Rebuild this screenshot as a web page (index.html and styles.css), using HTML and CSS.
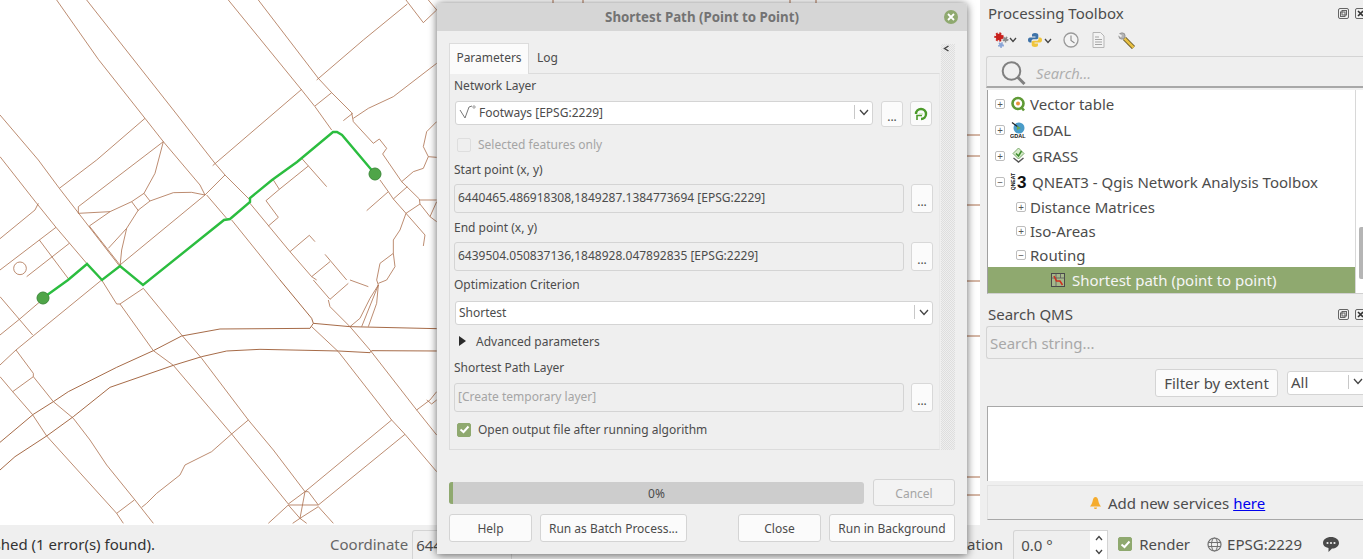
FILE: index.html
```html
<!DOCTYPE html>
<html>
<head>
    <title>QGIS - Shortest Path</title>
    <meta name="viewport" content="width=device-width, initial-scale=1.0">
    <link rel="stylesheet" href="styles.css">
</head>
<body>
    <div class="main">
        <div class="map">
            <svg class="map-svg" width="980" height="525" viewBox="0 0 980 525">
                <g class="roads" transform="scale(0.33333)">
                    <path d="M170 0L295 178L435 355L490 425L600 555L615 585M260 0L520 330L645 490L675 525L750 600L750 610L870 755L935 830L950 840M685 0L905 270L945 320L995 390M775 0L955 235L995 278L1055 338L1060 365L1120 430L1138 417L1160 445L1148 462L1205 545L1258 597L1260 612L1218 640L1275 705L1270 738"/>
                    <path d="M950 240L1090 120L1222 12M1218 0L1270 68L1310 30M1285 0L1310 30M1060 355L1105 325L1180 290L1310 190M1030 362L1058 340M945 318L995 278M638 497L905 268"/>
                    <path d="M0 345L115 480L178 565L360 800M0 470L110 610L168 682L260 790M178 565L290 480L435 355M235 640L235 620L490 425L465 520L432 580L395 605L330 635L235 640M432 580L450 603L520 578L575 577L615 585M450 603L415 630L380 685L365 750L360 800M395 605L415 632M330 635L268 678M380 685L325 745M268 678L360 795M360 795L615 585L675 525M620 585L680 655M695 660L840 840"/>
                    <path d="M115 610L105 630L0 716M168 682L0 810M208 730L80 830M118 720L208 840"/>
                    <circle cx="60" cy="805" r="19"/>
                    <path d="M820 540L838 568L925 498M905 475L980 560M838 568L798 602L835 652L805 678M870 755L928 706L945 725M975 763L1040 840M990 785L935 830"/>
                    <path d="M1140 540L1165 575L1100 632M1165 575L1180 597L1222 560M1180 597L1218 640M1260 600L1310 600M1260 612L1290 650L1310 665M1310 605L1290 650M1218 640L1200 690L1180 720L1180 760L1140 790L1130 840M1180 760L1185 800L1160 840M1205 545L1240 515L1270 505L1285 470L1270 440L1280 395L1310 365M1285 470L1310 472"/>
                    <g transform="translate(0 840)">
                        <path class="wide" d="M840 0L935 115L940 130L930 145L660 147L545 168L460 212L350 262L205 335L160 365L100 403L0 487M940 130L1050 140L1310 146M1015 213L1110 218L1115 212L1310 213M1015 213L780 208L680 213L605 230L520 256L330 322L220 410L140 468L45 530L0 570"/>
                        <path d="M940 0L990 58L1045 10M985 60L990 80L1050 140L1110 210L1250 390L1310 465M935 140L1015 215L1175 420L1215 463L1310 575M430 25L545 165L605 235L745 420L820 510L915 635M360 72L460 212L520 256L695 462L865 672M305 0L350 72L360 72L430 25"/>
                        <path d="M0 50L58 118L98 165M0 165L58 118L120 65M305 0L48 210L0 255M48 210L100 280L100 290L160 365L220 415L270 480L320 555L405 660L460 730M100 290L38 335L97 403L140 468L350 700L370 730M350 700L403 660M38 335L0 290"/>
                        <path d="M745 420L695 462L635 515L555 555L540 585L470 640L440 670L425 682M915 635L1175 420M955 675L1215 463M865 672L915 635L925 635L955 675L865 675L805 730M915 635L900 715L865 675M955 680L1000 730M955 680L900 715L878 730M900 715L920 730"/>
                        <path d="M1050 140L1080 115L1110 55L1135 15L1085 140M1135 15L1130 70L1105 140M1135 15L1130 0M1135 10L1160 0M1050 0L1105 20M1250 390L1290 360L1310 335M1280 360L1295 372L1310 360"/>
                    </g>
                </g>
                <path class="stub" d="M967 135H980M967 156H980M967 205H980M967 281H980M967 336H980M967 477H980M967 495H980M553 0V3M583 0V3M790 0V3M816 0V3"/>
                <path class="route" d="M43 298L68 280L87 264L102 280L120 266L143 285L224 220L230 219L250 202L250 198L272 180L297 162L333 132L337 132L342 135L375 174"/>
                <circle class="endpoint" cx="43" cy="298" r="6"/>
                <circle class="endpoint" cx="375" cy="174" r="6"/>
            </svg>
        </div>

        <div class="panel">
            <div class="dock-title">
                <span>Processing Toolbox</span>
                <span class="dock-btns">
                    <svg width="11" height="11" viewBox="0 0 11 11"><rect class="dock-i" x="0.5" y="0.5" width="10" height="10" rx="1.5"/><rect class="dock-i" x="4" y="2.5" width="4.5" height="4.5"/><rect class="dock-i" x="2.5" y="4" width="4.5" height="4.5"/></svg>
                    <svg width="11" height="11" viewBox="0 0 11 11"><rect class="dock-i" x="0.5" y="0.5" width="10" height="10" rx="1.5"/><path class="dock-x" d="M3 3L8 8M8 3L3 8"/></svg>
                </span>
            </div>
            <div class="toolbar">
                <svg width="24" height="18" viewBox="0 0 24 18">
                    <circle cx="6" cy="6" r="3.2" fill="#c8201c" stroke="#c8201c" stroke-width="3" stroke-dasharray="1.6 1.4"/>
                    <circle cx="12.5" cy="8.5" r="2" fill="#8b8b8b" stroke="#8b8b8b" stroke-width="2" stroke-dasharray="1.2 1"/>
                    <circle cx="8" cy="14" r="2" fill="#8aa5d6" stroke="#8aa5d6" stroke-width="2" stroke-dasharray="1.2 1"/>
                    <path class="chev" d="M17 7L20 10.5L23 7"/>
                </svg>
                <svg class="tool-py" width="24" height="15" viewBox="0 0 24 15">
                    <path d="M7 0C4.5 0 4 1 4 2V3.500H7.500V4.500H2C.7 4.500 0 5.500 0 7S.7 9.500 2 9.500H3.500V8C3.500 7 4.300 6.200 5.300 6.200H8.700C9.700 6.200 10.300 5.500 10.300 4.500V2C10.300 .8 9 0 7 0Z" fill="#3f73a8"/>
                    <path d="M7 0C4.5 0 4 1 4 2V3.500H7.500V4.500H2C.7 4.500 0 5.500 0 7S.7 9.500 2 9.500H3.500V8C3.500 7 4.300 6.200 5.300 6.200H8.700C9.700 6.200 10.300 5.500 10.300 4.500V2C10.300 .8 9 0 7 0Z" fill="#f0c53c" transform="rotate(180 7 7)"/>
                    <path class="chev" d="M17 6L20 9.500L23 6"/>
                </svg>
                <svg class="tool-clock" width="16" height="16" viewBox="0 0 16 16"><circle cx="8" cy="8" r="7" fill="#f4f4f4" stroke="#9a9a9a" stroke-width="1.300"/><path d="M8 3.500V8.500L11.500 11" fill="none" stroke="#8a8a8a" stroke-width="1.100"/></svg>
                <svg class="tool-doc" width="13" height="16" viewBox="0 0 13 16"><path d="M1 .5H8.500L12 4V15.500H1Z" fill="#f3f3f3" stroke="#b5b5b5"/><path d="M3 5H7M3 7.500H10M3 10H10M3 12.500H10" stroke="#a5a5a5"/></svg>
                <svg class="tool-wrench" width="17" height="17" viewBox="0 0 17 17"><circle cx="4" cy="4" r="3.200" fill="#b4b4b4" stroke="#777" stroke-width=".6"/><path d="M0 2L3.500 4.500" stroke="#efefef" stroke-width="2"/><path d="M6.500 6.500L15.500 15.500" stroke="#5e5022" stroke-width="4.400"/><path d="M6.500 6.500L15.500 15.500" stroke="#e8c044" stroke-width="2.600"/></svg>
            </div>
            <div class="search-box">
                <svg width="26" height="26" viewBox="0 0 26 26"><circle cx="10.500" cy="12" r="8.800" fill="none" stroke="#808080" stroke-width="2"/><path d="M17 18.500L23.500 25" stroke="#808080" stroke-width="3"/></svg>
                <span>Search...</span>
            </div>
            <div class="tree">
                <div class="tree-rows">
                    <div class="tree-row top"><span class="exp">+</span>
                        <svg class="ticon" width="16" height="16" viewBox="0 0 16 16"><circle cx="8" cy="7.500" r="5.500" fill="#fff" stroke="#5f9a35" stroke-width="2.600"/><path d="M11 11L14 14.500" stroke="#5f9a35" stroke-width="2.600"/><circle cx="8" cy="7.500" r="2" fill="#e8913c"/></svg>
                        <span class="tl">Vector table</span></div>
                    <div class="tree-row top"><span class="exp">+</span>
                        <svg class="ticon" width="16" height="18" viewBox="0 0 16 18"><circle cx="9" cy="7" r="5.500" fill="#4a9cc9"/><path d="M2 1.500L8 6" stroke="#222" stroke-width="1.200"/><path d="M7 5L11 7L7 9Z" fill="#6aa84f"/><text class="gdal" x="0" y="17">GDAL</text></svg>
                        <span class="tl2">GDAL</span></div>
                    <div class="tree-row top"><span class="exp">+</span>
                        <svg class="ticon" width="16" height="18" viewBox="0 0 16 18"><path d="M8.500 1L14 6.500L8.500 12L3 6.500Z" fill="#d6ecca" stroke="#7aa86a"/><path d="M6 6.500L8.500 9L11.500 4" fill="none" stroke="#3d8c2e" stroke-width="1.500"/><path d="M3.500 11L8.500 15L13.500 11" fill="none" stroke="#555" stroke-width="1.400"/></svg>
                        <span class="tl2">GRASS</span></div>
                    <div class="tree-row top"><span class="exp">−</span>
                        <span class="qneat"><span class="qneat-side">QNEAT</span><span class="qneat-3">3</span></span>
                        <span class="tl2">QNEAT3 - Qgis Network Analysis Toolbox</span></div>
                    <div class="tree-row sub"><span class="exp">+</span><span>Distance Matrices</span></div>
                    <div class="tree-row sub"><span class="exp">+</span><span>Iso-Areas</span></div>
                    <div class="tree-row sub"><span class="exp">−</span><span>Routing</span></div>
                    <div class="tree-row picked">
                        <svg width="14" height="14" viewBox="0 0 14 14"><rect x=".5" y=".5" width="13" height="13" fill="#a5b78a" stroke="#4a4a4a"/><path d="M.5 5H13.500M5 .5V13.500M9.500 .5V5" stroke="#5a5a5a" stroke-width=".8"/><path d="M3 3L5.500 8L9 8L11.500 12" fill="none" stroke="#d0301e" stroke-width="1.600"/></svg>
                        <span>Shortest path (point to point)</span>
                    </div>
                </div>
                <div class="tree-scroll"><div class="tree-thumb"></div></div>
            </div>

            <div class="dock-title qms-title">
                <span>Search QMS</span>
                <span class="dock-btns">
                    <svg width="11" height="11" viewBox="0 0 11 11"><rect class="dock-i" x="0.5" y="0.5" width="10" height="10" rx="1.5"/><rect class="dock-i" x="4" y="2.5" width="4.5" height="4.5"/><rect class="dock-i" x="2.5" y="4" width="4.5" height="4.5"/></svg>
                    <svg width="11" height="11" viewBox="0 0 11 11"><rect class="dock-i" x="0.5" y="0.5" width="10" height="10" rx="1.5"/><path class="dock-x" d="M3 3L8 8M8 3L3 8"/></svg>
                </span>
            </div>
            <div class="qms-search">Search string...</div>
            <div class="qms-filter">
                <div class="btn filter-btn">Filter by extent</div>
                <div class="combo all-combo"><span>All</span><span class="combo-arrow"><svg width="10" height="7" viewBox="0 0 10 7"><path class="chev" d="M1 1L5 5.500L9 1"/></svg></span></div>
            </div>
            <div class="qms-list"></div>
            <div class="qms-notice">
                <svg width="11" height="12" viewBox="0 0 11 12"><path d="M5.500 0C7 0 7.500 1 8 2.500C8.500 5 9 7 11 9.500H0C2 7 2.500 5 3 2.500C3.500 1 4 0 5.500 0ZM4 10.500H7C7 11.500 6.300 12 5.500 12S4 11.500 4 10.500Z" fill="#f5ac2e"/></svg>
                <span>Add new services <a class="here" href="#">here</a></span>
            </div>
        </div>
    </div>

    <div class="status">
        <div class="status-msg"><span>Finished (1 error(s) found).</span></div>
        <span class="coord-label">Coordinate</span>
        <div class="coord-field">6440</div>
        <div class="status-right">
            <span>Rotation</span>
            <div class="spin">
                <span class="spin-val">0.0 °</span>
                <span class="spin-btns">
                    <svg width="8" height="6" viewBox="0 0 8 6"><path class="chev" d="M1 5L4 1.500L7 5"/></svg>
                    <svg width="8" height="6" viewBox="0 0 8 6"><path class="chev" d="M1 1L4 4.500L7 1"/></svg>
                </span>
            </div>
            <span class="check on render-check"><svg width="11" height="9" viewBox="0 0 11 9"><path d="M1.500 4.500L4.500 7L9.500 1.500" fill="none" stroke="#fff" stroke-width="2"/></svg></span>
            <span class="render-label">Render</span>
            <svg class="globe" width="15" height="15" viewBox="0 0 15 15"><circle cx="7.500" cy="7.500" r="6.500" fill="none" stroke="#707070" stroke-width="1.200"/><ellipse cx="7.500" cy="7.500" rx="3" ry="6.500" fill="none" stroke="#707070"/><path d="M1 5.500H14M1 9.500H14" stroke="#707070"/></svg>
            <span class="epsg">EPSG:2229</span>
            <svg class="chat" width="16" height="15" viewBox="0 0 16 15"><path d="M8 0C12.500 0 16 2.500 16 6C16 9.500 12.500 11.500 9 11.500L5.500 15V11C2 10.500 0 8.500 0 6C0 2.500 3.500 0 8 0Z" fill="#4a4a4a"/><circle cx="4.500" cy="6" r="1.100" fill="#efefef"/><circle cx="8" cy="6" r="1.100" fill="#efefef"/><circle cx="11.500" cy="6" r="1.100" fill="#efefef"/></svg>
        </div>
    </div>

    <!-- venster dialoog -->
    <div class="dialog">
        <div class="dlg-title">
            <span>Shortest Path (Point to Point)</span>
            <span class="dlg-close"><svg width="8" height="8" viewBox="0 0 8 8"><path d="M1 1L7 7M7 1L1 7" stroke="#fff" stroke-width="1.800"/></svg></span>
        </div>
        <div class="dlg-body">
            <div class="dlg-top">
                <div class="tabs-wrap">
                    <div class="tabs">
                        <div class="tab active">Parameters</div>
                        <div class="tab">Log</div>
                    </div>
                    <div class="pane">
                        <div class="lbl mt4">Network Layer</div>
                        <div class="row mt7">
                            <div class="combo net-combo">
                                <svg width="18" height="14" viewBox="0 0 18 14"><path d="M1 5L6 13L10 2L13 1" fill="none" stroke="#777"/><circle cx="15" cy="2" r="1.200" fill="none" stroke="#777" stroke-width=".7"/></svg>
                                <span>Footways [EPSG:2229]</span>
                                <span class="combo-arrow"><svg width="10" height="7" viewBox="0 0 10 7"><path class="chev" d="M1 1L5 5.500L9 1"/></svg></span>
                            </div>
                            <div class="dots tall">...</div>
                            <div class="dots tall2">
                                <svg width="14" height="14" viewBox="0 0 14 14"><path d="M2 7A5 5 0 1 1 7 12" fill="none" stroke="#4c9a2a" stroke-width="2.400"/><path d="M3 13V8.500H8" fill="none" stroke="#4c9a2a" stroke-width="1.600"/><path d="M5 7H9" stroke="#bfe3a6" stroke-width="1.200"/></svg>
                            </div>
                        </div>
                        <div class="chk-row mt10 off"><span class="check"></span><span>Selected features only</span></div>
                        <div class="lbl mt10">Start point (x, y)</div>
                        <div class="row mt6">
                            <div class="input">6440465.486918308,1849287.1384773694 [EPSG:2229]</div>
                            <div class="dots">...</div>
                        </div>
                        <div class="lbl mt7">End point (x, y)</div>
                        <div class="row mt6">
                            <div class="input">6439504.050837136,1848928.047892835 [EPSG:2229]</div>
                            <div class="dots">...</div>
                        </div>
                        <div class="lbl mt6">Optimization Criterion</div>
                        <div class="row mt8">
                            <div class="combo opt-combo"><span>Shortest</span><span class="combo-arrow"><svg width="10" height="7" viewBox="0 0 10 7"><path class="chev" d="M1 1L5 5.500L9 1"/></svg></span></div>
                        </div>
                        <div class="adv mt8"><span class="tri"></span><span>Advanced parameters</span></div>
                        <div class="lbl mt11">Shortest Path Layer</div>
                        <div class="row mt7">
                            <div class="input ph">[Create temporary layer]</div>
                            <div class="dots">...</div>
                        </div>
                        <div class="chk-row mt10"><span class="check on"><svg width="11" height="9" viewBox="0 0 11 9"><path d="M1.500 4.500L4.500 7L9.500 1.500" fill="none" stroke="#fff" stroke-width="2"/></svg></span><span>Open output file after running algorithm</span></div>
                    </div>
                </div>
                <div class="strip"><svg width="7" height="7" viewBox="0 0 7 7"><path d="M5.500 1L1.500 3.500L5.500 6" fill="none" stroke="#444" stroke-width="1.400"/></svg></div>
            </div>
            <div class="progress-row">
                <div class="progress"><div class="progress-fill"></div><span>0%</span></div>
                <div class="btn cancel">Cancel</div>
            </div>
            <div class="btn-row">
                <div class="btn w83">Help</div>
                <div class="btn w147">Run as Batch Process...</div>
                <div class="btn w83 push">Close</div>
                <div class="btn w126">Run in Background</div>
            </div>
        </div>
    </div>
</body>
</html>
```

FILE: styles.css
```css
body {
    margin: 0;
    width: 1363px;
    height: 559px;
    overflow: hidden;
    position: relative;
    background-color: #efefef;
    font-family: "Noto Sans", sans-serif;
    font-size: 15px;
    color: #4c4c4c;
}

.main {
    display: flex;
    height: 525px;
}

/* map canvas */
.map {
    width: 980px;
    height: 525px;
    flex: none;
    background-color: #fff;
    overflow: hidden;
}

.map-svg {
    display: block;
}

.roads path,
.roads circle {
    fill: none;
    stroke: #ab6f4c;
    stroke-width: 2.4;
}

.roads path.wide {
    stroke: #9c5a33;
    stroke-width: 2.7;
}

.stub {
    fill: none;
    stroke: #ab6f4c;
}

.route {
    fill: none;
    stroke: #2bbd3f;
    stroke-width: 2.4;
}

.endpoint {
    fill: #4fa548;
    stroke: #3d8a3a;
}

/* right docks */
.panel {
    flex: 1;
    min-width: 0;
    overflow: hidden;
    display: flex;
    flex-direction: column;
}

.dock-title {
    height: 26px;
    padding-left: 8px;
    display: flex;
    justify-content: space-between;
    align-items: center;
}

.dock-btns {
    display: flex;
    gap: 6px;
    margin-right: -3px;
}

.dock-i {
    fill: none;
    stroke: #555;
    stroke-width: 0.9;
}

.dock-x {
    stroke: #333;
    stroke-width: 1.6;
}

.toolbar {
    height: 28px;
    padding-left: 13px;
    padding-bottom: 2px;
    display: flex;
    align-items: center;
}

.tool-py { margin-left: 11px; }
.tool-clock { margin-left: 11px; }
.tool-doc { margin-left: 13px; }
.tool-wrench { margin-left: 13px; }

.chev {
    fill: none;
    stroke: #444;
    stroke-width: 1.3;
}

.search-box {
    height: 32px;
    margin-left: 6px;
    box-sizing: border-box;
    border: 1px solid #d4d4d4;
    border-bottom: 2px solid #a8a8a8;
    border-right: 0;
    border-radius: 3px 0 0 0;
    display: flex;
    align-items: center;
    padding-left: 14px;
    gap: 9px;
    color: #b0b0b0;
    font-size: 14.7px;
    font-style: italic;
}

.search-box span {
    padding-top: 2px;
}

.tree {
    height: 204px;
    margin-top: 2px;
    margin-left: 7px;
    box-sizing: border-box;
    background-color: #fff;
    border-left: 1px solid #a0a0a0;
    border-bottom: 1px solid #d0d0d0;
    display: flex;
}

.tree-rows {
    width: 367px;
    flex: none;
    padding-top: 1px;
}

.tree-row {
    display: flex;
    align-items: center;
    white-space: nowrap;
}

.tree-row.top {
    height: 26px;
    padding-left: 7px;
}

.tree-row.sub {
    height: 24px;
    padding-left: 28px;
}

.exp {
    width: 10px;
    height: 10px;
    box-sizing: border-box;
    border: 1px solid #bdbdbd;
    border-radius: 2px;
    flex: none;
    display: flex;
    align-items: center;
    justify-content: center;
    font-size: 10px;
    line-height: 1;
    color: #555;
}

.tree-row.sub .exp {
    margin-right: 4px;
}

.ticon {
    margin-left: 5px;
    flex: none;
}

.tl { margin-left: 4px; }
.tl2 { margin-left: 6px; }

.gdal {
    font-family: "Liberation Sans", sans-serif;
    font-size: 5.5px;
    font-weight: bold;
    fill: #111;
}

.qneat {
    width: 16px;
    height: 17px;
    margin-left: 5px;
    flex: none;
    display: flex;
    align-items: center;
    justify-content: flex-end;
    color: #111;
}

.qneat-side {
    font-family: "Liberation Sans", sans-serif;
    writing-mode: vertical-rl;
    transform: rotate(180deg);
    font-size: 5px;
    font-weight: bold;
    line-height: 7px;
}

.qneat-3 {
    width: 9px;
    font-family: "Liberation Sans", sans-serif;
    font-size: 17px;
    font-weight: bold;
    line-height: 17px;
}

.tree-row.picked {
    height: 26px;
    padding-left: 63px;
    gap: 7px;
    background-color: #8fa96f;
    color: #f5f5f5;
}

.tree-scroll {
    flex: 1;
    border-left: 1px solid #d8d8d8;
    padding-left: 3px;
}

.tree-thumb {
    width: 5px;
    height: 52px;
    margin-top: 137px;
    background-color: #b5b5b5;
    border-radius: 2px 0 0 2px;
}

.qms-title {
    height: 24px;
    margin-top: 8px;
}

.qms-search {
    height: 33px;
    margin-left: 6px;
    box-sizing: border-box;
    border: 1px solid #d4d4d4;
    border-right: 0;
    border-radius: 3px 0 0 3px;
    padding-left: 3px;
    display: flex;
    align-items: center;
    color: #a8a8a8;
}

.qms-filter {
    margin-top: 7px;
    margin-left: 175px;
    height: 33px;
    display: flex;
    align-items: center;
    gap: 9px;
}

.filter-btn {
    width: 123px;
    height: 33px;
    flex: none;
}

.all-combo {
    width: 80px;
    height: 29px;
    flex: none;
    padding-bottom: 0;
}

.qms-list {
    height: 75px;
    margin-top: 7px;
    margin-left: 7px;
    box-sizing: border-box;
    background-color: #fff;
    border: 1px solid #a8a8a8;
    border-bottom: 0;
    border-right: 0;
}

.qms-notice {
    height: 35px;
    margin-top: 4px;
    margin-left: 7px;
    box-sizing: border-box;
    border-left: 1px solid #e2e2e2;
    border-top: 1px solid #e2e2e2;
    border-bottom: 1px solid #a8a8a8;
    display: flex;
    align-items: center;
    padding-left: 102px;
    gap: 7px;
}

.here {
    color: #0000ee;
}

/* status bar */
.status {
    height: 34px;
    box-sizing: border-box;
    padding-top: 4px;
    display: flex;
    align-items: center;
    white-space: nowrap;
}

.status-msg {
    width: 155px;
    flex: none;
    overflow: hidden;
    display: flex;
    justify-content: flex-end;
    color: #333;
}

.status-msg span {
    flex: none;
}

.coord-label {
    margin-left: 175px;
    color: #666;
}

.coord-field {
    margin-left: 4px;
    height: 29px;
    align-self: flex-end;
    padding-left: 3px;
    width: 100px;
    box-sizing: border-box;
    border: 1px solid #d4d4d4;
    border-bottom: 0;
    border-radius: 3px 0 0 0;
    display: flex;
    align-items: center;
}

.status-right {
    margin-left: auto;
    padding-right: 24px;
    display: flex;
    align-items: center;
    height: 30px;
}

.spin {
    width: 95px;
    height: 29px;
    margin-left: 10px;
    align-self: flex-end;
    box-sizing: border-box;
    border: 1px solid #d4d4d4;
    border-bottom: 0;
    border-radius: 3px 0 0 0;
    display: flex;
    align-items: center;
}

.spin-val {
    flex: 1;
    padding-left: 7px;
}

.spin-btns {
    width: 17px;
    height: 100%;
    background-color: #fff;
    display: flex;
    flex-direction: column;
    align-items: center;
    justify-content: space-around;
}

.render-check {
    margin-left: 10px;
}

.render-label {
    margin-left: 7px;
}

.globe {
    margin-left: 17px;
}

.epsg {
    margin-left: 5px;
}

.chat {
    margin-left: 21px;
}

/* dialog window */
.dialog {
    position: absolute;
    left: 437px;
    top: 3px;
    width: 530px;
    height: 551px;
    background-color: #efefef;
    border-radius: 4px 4px 0 0;
    box-shadow: 0 1px 9px rgba(0, 0, 0, 0.6);
    font-size: 12px;
}

.dlg-title {
    height: 28px;
    background-color: #d6d6d6;
    border-radius: 4px 4px 0 0;
    display: flex;
    align-items: center;
    justify-content: center;
    position: relative;
    font-size: 13.3px;
    font-weight: bold;
    color: #737373;
}

.dlg-close {
    position: absolute;
    right: 9px;
    top: 7px;
    width: 14px;
    height: 14px;
    border-radius: 50%;
    background-color: #8fa96f;
    display: flex;
    align-items: center;
    justify-content: center;
}

.dlg-body {
    padding: 12px 12px 0;
}

.dlg-top {
    display: flex;
    align-items: flex-end;
}

.tabs-wrap {
    width: 491px;
    flex: none;
}

.tabs {
    display: flex;
    height: 31px;
    align-items: flex-end;
}

.tab {
    height: 29px;
    padding: 0 8px 4px;
    box-sizing: border-box;
    display: flex;
    align-items: center;
}

.tab.active {
    height: 31px;
    width: 80px;
    justify-content: center;
    padding: 0 0 4px;
    background-color: #fbfbfb;
    border: 1px solid #dcdcdc;
    border-bottom: 0;
}

.pane {
    height: 377px;
    box-sizing: border-box;
    border: 1px solid #dcdcdc;
    border-right-color: #e8e8e8;
    padding: 0 6px 0 4px;
    margin-top: -1px;
}

.lbl {
    height: 16px;
    line-height: 16px;
}

.mt4 { margin-top: 4px; }
.mt6 { margin-top: 6px; }
.mt7 { margin-top: 7px; }
.mt8 { margin-top: 8px; }
.mt10 { margin-top: 10px; }
.mt11 { margin-top: 11px; }

.row {
    display: flex;
    align-items: flex-start;
    gap: 7px;
}

.combo {
    height: 24px;
    box-sizing: border-box;
    background-color: #fff;
    border: 1px solid #d4d4d4;
    border-radius: 3px;
    display: flex;
    align-items: center;
    padding: 0 0 2px 3px;
    white-space: nowrap;
}

.combo-arrow {
    margin-left: auto;
    width: 17px;
    height: 14px;
    flex: none;
    border-left: 1px solid #c8c8c8;
    display: flex;
    align-items: center;
    justify-content: center;
}

.net-combo {
    width: 418px;
    margin-left: 1px;
    margin-right: 1px;
    gap: 2px;
}

.opt-combo {
    width: 478px;
    margin-left: 1px;
}

.dots {
    width: 22px;
    height: 29px;
    flex: none;
    box-sizing: border-box;
    background-color: #fbfbfb;
    border: 1px solid #d8d8d8;
    border-radius: 3px;
    display: flex;
    align-items: center;
    justify-content: center;
    padding-top: 5px;
}

.dots.tall {
    height: 26px;
}

.dots.tall2 {
    height: 25px;
    padding-top: 0;
}

.input {
    width: 450px;
    height: 29px;
    flex: none;
    box-sizing: border-box;
    border: 1px solid #d4d4d4;
    border-radius: 3px;
    padding: 0 0 2px 3px;
    display: flex;
    align-items: center;
    white-space: nowrap;
}

.input.ph {
    color: #a5a5a5;
}

.chk-row {
    height: 15px;
    padding-left: 3px;
    display: flex;
    align-items: center;
    gap: 7px;
}

.chk-row.off {
    color: #a5a5a5;
}

.check {
    width: 14px;
    height: 14px;
    flex: none;
    box-sizing: border-box;
    border: 1px solid #dedede;
    border-radius: 2px;
    display: flex;
    align-items: center;
    justify-content: center;
}

.check.on {
    background-color: #8fa96f;
    border-color: #8fa96f;
}

.adv {
    height: 16px;
    padding-left: 5px;
    display: flex;
    align-items: center;
    gap: 10px;
}

.tri {
    width: 0;
    height: 0;
    border-left: 7px solid #2a2a2a;
    border-top: 5.5px solid transparent;
    border-bottom: 5.5px solid transparent;
}

.strip {
    width: 14px;
    height: 406px;
    margin-left: 1px;
    box-sizing: border-box;
    padding: 0 0 0 2px;
    background-image: repeating-conic-gradient(#dedede 0 25%, transparent 0 50%);
    background-size: 2px 2px;
}

.strip svg {
    display: block;
    margin-top: 1px;
}

.progress-row {
    margin-top: 29px;
    display: flex;
    align-items: center;
    gap: 9px;
}

.progress {
    width: 415px;
    height: 22px;
    flex: none;
    box-sizing: border-box;
    padding-top: 2px;
    background-color: #cdcdcd;
    border-radius: 3px;
    overflow: hidden;
    position: relative;
    display: flex;
    align-items: center;
    justify-content: center;
}

.progress-fill {
    position: absolute;
    left: 0;
    top: 0;
    width: 4px;
    height: 100%;
    background-color: #8fa96f;
}

.btn {
    height: 28px;
    flex: none;
    box-sizing: border-box;
    background-color: #fbfbfb;
    border: 1px solid #d4d4d4;
    border-radius: 3px;
    display: flex;
    align-items: center;
    justify-content: center;
    white-space: nowrap;
}

.cancel {
    width: 82px;
    height: 27px;
    padding-top: 2px;
    color: #a5a5a5;
    background-color: #f3f3f3;
}

.btn-row {
    margin-top: 8px;
    display: flex;
    gap: 8px;
}

.w83 { width: 83px; }
.w147 { width: 147px; }
.w126 { width: 126px; }
.push { margin-left: auto; }
```
